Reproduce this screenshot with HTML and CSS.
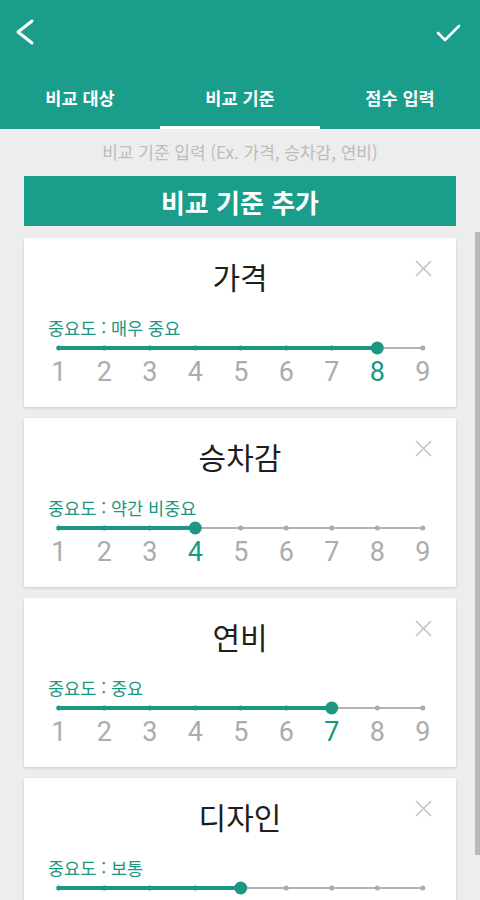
FILE: index.html
```html
<!DOCTYPE html>
<html lang="ko">
  <head>
    <meta charset="UTF-8" />
    <meta name="viewport" content="width=device-width, initial-scale=1.0" />
    <title>비교 기준</title>
    <link rel="stylesheet" href="styles.css">
  </head>
  <body>
    <header class="app-bar">
      <div class="toolbar">
        <svg class="icon-back" width="20" height="28" viewBox="0 0 20 28">
          <polyline points="17,3 3,14 17,25" />
        </svg>
        <svg class="icon-check" width="30" height="26" viewBox="0 0 30 26">
          <polyline points="4,13 11,20 25,6" />
        </svg>
      </div>
      <nav class="tabs">
        <div class="tab">비교 대상</div>
        <div class="tab active">비교 기준</div>
        <div class="tab">점수 입력</div>
      </nav>
    </header>

    <main>
      <p class="hint">비교 기준 입력 (Ex. 가격, 승차감, 연비)</p>
      <button class="add-btn">비교 기준 추가</button>
      <div class="criteria-list" id="criteria-list"></div>
    </main>

    <div class="scrollbar"></div>

    <script>
      const criteria = [
        { name: "가격", label: "매우 중요", value: 8 },
        { name: "승차감", label: "약간 비중요", value: 4 },
        { name: "연비", label: "중요", value: 7 },
        { name: "디자인", label: "보통", value: 5 },
      ];

      const STEP = 45.5;
      const START = 22.75;

      function sliderSvg(value) {
        const x = (n) => START + (n - 1) * STEP;
        let svg = '<svg class="track" width="410" height="20" viewBox="0 0 410 20">';
        svg += `<line class="rest" x1="${x(value)}" y1="10" x2="${x(9)}" y2="10" />`;
        svg += `<line class="fill" x1="${x(1)}" y1="10" x2="${x(value)}" y2="10" />`;
        for (let n = 1; n <= 9; n++) {
          svg += `<circle class="${n <= value ? "dot on" : "dot"}" cx="${x(n)}" cy="10" r="2.5" />`;
        }
        svg += `<circle class="thumb" cx="${x(value)}" cy="10" r="6.5" />`;
        return svg + "</svg>";
      }

      const list = document.getElementById("criteria-list");
      criteria.forEach((c) => {
        let nums = "";
        for (let n = 1; n <= 9; n++) {
          nums += `<span class="${n === c.value ? "num selected" : "num"}">${n}</span>`;
        }
        const card = document.createElement("div");
        card.className = "card";
        card.innerHTML = `
          <h3 class="card-title">${c.name}</h3>
          <svg class="close" width="17" height="17" viewBox="0 0 17 17">
            <line x1="1" y1="1" x2="16" y2="16" />
            <line x1="16" y1="1" x2="1" y2="16" />
          </svg>
          <p class="importance">중요도 : ${c.label}</p>
          <div class="slider">
            ${sliderSvg(c.value)}
            <div class="numbers">${nums}</div>
          </div>`;
        list.appendChild(card);
      });
    </script>
  </body>
</html>
```

FILE: styles.css
```css
/* General Styling */
html,
body {
  height: 900px;
  overflow: hidden;
}

body {
  font-family: "Noto Sans CJK KR", "Noto Sans", sans-serif;
  margin: 0;
  padding: 0;
  background-color: #ededed;
  color: #222;
  position: relative;
}

/* App bar */
.app-bar {
  background-color: #1b9d8b;
  color: white;
}

.toolbar {
  height: 66px;
  display: flex;
  justify-content: space-between;
  align-items: flex-start;
  padding: 0 16px 0 15px;
}

.toolbar svg {
  fill: none;
  stroke: white;
  stroke-linecap: round;
  stroke-linejoin: round;
}

.icon-back {
  margin-top: 18px;
  stroke-width: 3;
}

.icon-check {
  margin-top: 20px;
  stroke-width: 2.6;
}

.tabs {
  display: grid;
  grid-template-columns: repeat(3, 1fr);
  height: 63px;
}

.tab {
  display: flex;
  align-items: center;
  justify-content: center;
  font-size: 17.5px;
  font-weight: bold;
  padding-top: 3px;
  border-bottom: 3px solid transparent;
}

.tab.active {
  border-bottom-color: white;
}

/* Content */
main {
  padding: 0 24px;
}

.hint {
  margin: 13px 0 0;
  line-height: 20px;
  font-size: 17px;
  text-align: center;
  color: #bcbcbc;
}

.add-btn {
  display: block;
  width: 100%;
  height: 50px;
  margin-top: 14px;
  border: none;
  border-radius: 0;
  background-color: #1b9d8b;
  color: white;
  font-family: inherit;
  font-size: 26px;
  font-weight: bold;
}

.criteria-list {
  display: flex;
  flex-direction: column;
  gap: 11px;
  margin-top: 12px;
}

.card {
  position: relative;
  height: 169px;
  box-sizing: border-box;
  padding: 18px 0 0;
  background-color: white;
  border-radius: 2px;
  box-shadow: 0 1px 3px rgba(0, 0, 0, 0.15);
}

.card-title {
  margin: 0;
  line-height: 40px;
  font-size: 30px;
  font-weight: normal;
  text-align: center;
  color: #1e1e1e;
}

.close {
  position: absolute;
  top: 22px;
  right: 24px;
  stroke: #c2c2c2;
  stroke-width: 1.6;
}

.importance {
  margin: 22px 0 0 24px;
  line-height: 20px;
  font-size: 17.5px;
  color: #1b9783;
}

.slider {
  padding: 0 11px 0 12px;
}

.track {
  display: block;
}

.track line {
  stroke-linecap: round;
}

.track .rest {
  stroke: #b3b3b3;
  stroke-width: 2;
}

.track .fill {
  stroke: #1b9783;
  stroke-width: 4;
}

.dot {
  fill: #aaaaaa;
}

.dot.on,
.thumb {
  fill: #1b9783;
}

.numbers {
  display: grid;
  grid-template-columns: repeat(9, 45.5px);
  margin-top: -1px;
}

.num {
  text-align: center;
  font-family: Roboto, sans-serif;
  font-size: 27px;
  line-height: 30px;
  color: #acacac;
}

.num.selected {
  color: #1b9783;
}

.scrollbar {
  position: absolute;
  top: 232px;
  right: 0;
  width: 5px;
  height: 623px;
  background-color: #b9b9b9;
}
```
